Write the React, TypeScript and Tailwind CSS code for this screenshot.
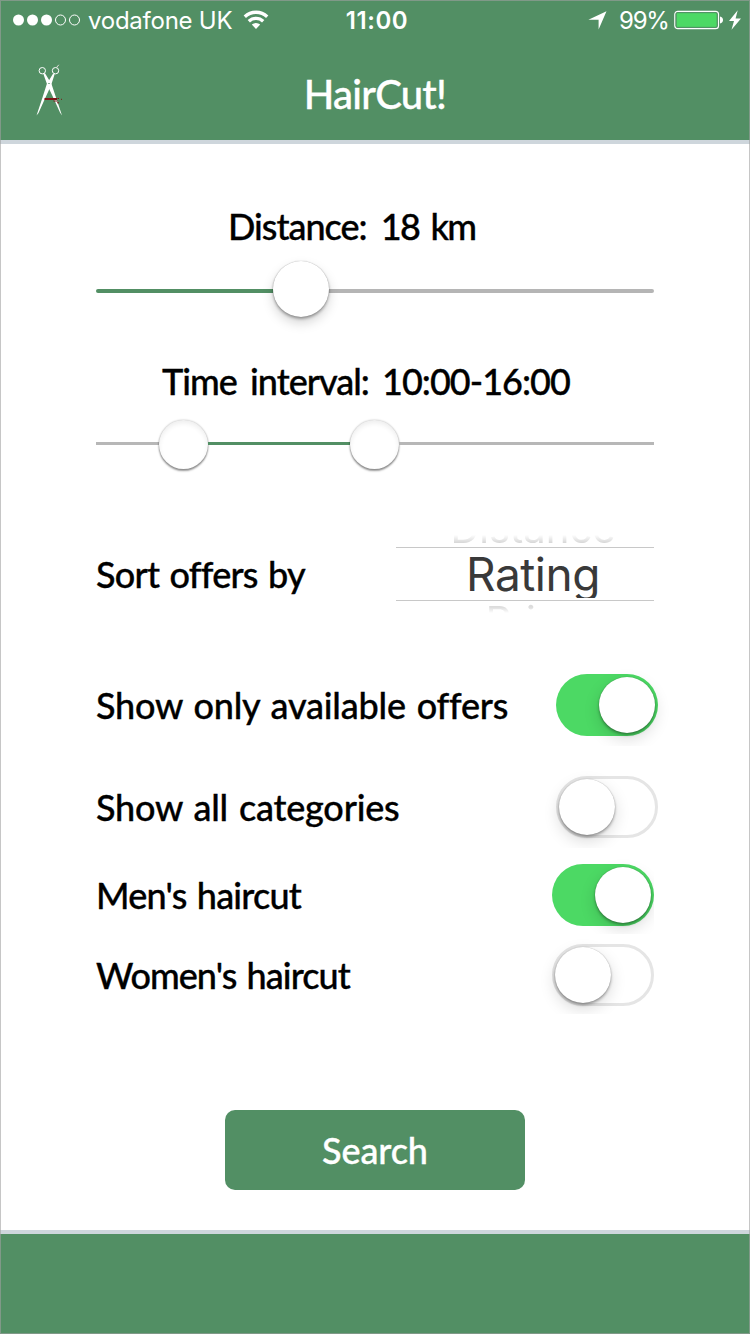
import React from "react";

const labelFont =
  "font-['Lato',sans-serif] font-medium whitespace-nowrap [font-variant-ligatures:none] [-webkit-text-stroke-width:0.35px]";

function StatusBar() {
  return (
    <div className="flex h-10 items-center justify-between pl-[13px] pr-[9px] font-['Inter',sans-serif] text-white">
      <div className="flex w-[280px] items-center">
        <svg width="68" height="12" viewBox="0 0 68 12" fill="#fff">
          <circle cx="5.5" cy="6" r="5.5" />
          <circle cx="19.5" cy="6" r="5.5" />
          <circle cx="33.5" cy="6" r="5.5" />
          <circle cx="47.5" cy="6" r="5" fill="none" stroke="#fff" />
          <circle cx="61.5" cy="6" r="5" fill="none" stroke="#fff" />
        </svg>
        <span className="ml-[7px] w-[146px] whitespace-nowrap pt-[2px] text-[24px] leading-10 tracking-[-0.25px]">vodafone UK</span>
        <svg className="ml-[9px]" width="26" height="20" viewBox="0 0 26 20" fill="none" stroke="#fff" strokeWidth="3.3">
          <path d="M1.8 6.8a16 16 0 0 1 22.4 0" />
          <path d="M5.8 11.3a10.3 10.3 0 0 1 14.4 0" />
          <path d="M8.8 14.6a6.3 6.3 0 0 1 8.4 0L13 19z" fill="#fff" stroke="none" />
        </svg>
      </div>
      <span className="pt-[2px] text-[24px] font-semibold leading-10 tracking-[0.6px]">11:00</span>
      <div className="flex w-[280px] items-center justify-end">
        <svg width="19" height="19" viewBox="0 0 19 19" fill="#fff">
          <path d="M18.5.3 10.6 18.5V8.8H.4z" />
        </svg>
        <span className="ml-[12px] w-[50px] whitespace-nowrap pt-[2px] text-[24px] leading-10 tracking-[-1.2px]">99%</span>
        <svg className="ml-[5px]" width="50" height="20" viewBox="0 0 50 20">
          <rect x=".8" y="1.3" width="43.7" height="17.4" rx="3" fill="none" stroke="#fff" strokeWidth="1.2" />
          <rect x="2.2" y="2.7" width="40.9" height="14.6" rx="1.5" fill="#4cd964" stroke="#528f64" strokeWidth=".9" />
          <path d="M46 6.5c4 .8 4 6.2 0 7z" fill="#fff" />
        </svg>
        <svg className="ml-[5px]" width="12" height="20" viewBox="0 0 12 20" fill="#fff">
          <path d="M8.7.3 0 11h5L2.5 19.7 12 8.4H6.6z" />
        </svg>
      </div>
    </div>
  );
}

function Scissors() {
  return (
    <svg width="28" height="54" viewBox="0 0 28 54" fill="none">
      <circle cx="6.3" cy="6.7" r="3.2" stroke="#fff" strokeWidth="1" />
      <circle cx="19.5" cy="6.7" r="3.2" stroke="#fff" strokeWidth="1" />
      <path d="M20.5 3.5 22.8.8" stroke="#e7dede" strokeWidth="1" />
      <path d="M7.2 9.5 9 9.2 15.5 20 20 33.5 26 51.5 24 48.5 16.5 32 11.5 21.5z" fill="#fff" />
      <path d="M18.7 10 17 9.8 10.8 20 6.5 33.5 .5 51.5 2.5 49 9.5 33.5 15 21.5z" fill="#fff" />
      <path d="M12 19.5h2" stroke="#8fb69b" strokeWidth="1" />
      <path d="M8.5 35H21" stroke="#7b1416" strokeWidth="2" />
      <path d="M17.5 37h4M21 38.8h2M25 35.3h1M21.5 34.5h1.5" stroke="#7b1416" strokeWidth="1" />
    </svg>
  );
}

function Switch({ on, clip }: { on?: boolean; clip?: boolean }) {
  return (
    <div className={clip ? "[clip-path:inset(-12px_0_-8px_-20px)]" : "[clip-path:inset(-12px_-12px_-10px_-20px)]"}>
      <div
        className={
          on
            ? "flex h-[62px] w-[102px] items-center justify-end rounded-full bg-[#4cd964] px-[3px]"
            : "flex h-[62px] w-[102px] items-center rounded-full border-[3px] border-[#e5e5e5] bg-white"
        }
      >
        <div className="size-[56px] rounded-full bg-white shadow-[0_6px_16px_rgba(0,0,0,0.15),0_2px_3px_rgba(0,0,0,0.32),0_0_1px_rgba(0,0,0,0.3)]" />
      </div>
    </div>
  );
}

export default function App() {
  return (
    <div className="relative flex h-[1334px] w-[750px] flex-col overflow-hidden bg-white text-black">
      <header className="h-[144px] border-b-4 border-[#ced6dc] bg-[#528f64]">
        <StatusBar />
        <div className="grid h-[100px] grid-cols-3 px-9 pt-6">
          <Scissors />
          <h1 className={`${labelFont} pt-[5px] text-center text-[40px] leading-[50px] tracking-[-0.75px] text-white`}>HairCut!</h1>
        </div>
      </header>

      <main className="flex h-[1086px] flex-col px-24 pt-[60px]">
        <div className={`${labelFont} pl-[132px] text-[36px] leading-[44px]`}>
          <span className="tracking-[-1.25px] [word-spacing:4px]">
            <span className="tracking-[-1px] [word-spacing:6px]">Distance: </span>
            <span className="tracking-[-1.7px]">18 km</span>
          </span>
        </div>
        <div className="mt-[12px] flex h-[57px] items-center">
          <div className="mt-[5px] h-1 w-[177px] rounded-l-full bg-[#528f64]" />
          <div className="z-10 size-[56px] rounded-full bg-white shadow-[0_6px_12px_rgba(0,0,0,0.17),0_2px_3px_rgba(0,0,0,0.32),0_0_1px_rgba(0,0,0,0.35)]" />
          <div className="mt-[5px] h-1 flex-1 rounded-r-full bg-[#b5b5b5]" />
        </div>

        <div className={`${labelFont} mt-[42px] pl-[66px] text-[36px] leading-[44px]`}>
          <span className="tracking-[-0.98px] [word-spacing:5px]">Time interval: 10:00-16:00</span>
        </div>
        <div className="mt-[16px] flex h-[49px] items-center">
          <div className="h-[3px] w-[63px] bg-[#b7b7b7]" />
          <div className="mt-[2px] size-[49px] rounded-full bg-white shadow-[0_2px_2px_rgba(0,0,0,0.4),0_0_2px_rgba(0,0,0,0.3),inset_0_3px_5px_rgba(0,0,0,0.07)]" />
          <div className="h-[3px] w-[142px] bg-[#528f64]" />
          <div className="mt-[2px] size-[49px] rounded-full bg-white shadow-[0_2px_2px_rgba(0,0,0,0.4),0_0_2px_rgba(0,0,0,0.3),inset_0_3px_5px_rgba(0,0,0,0.07)]" />
          <div className="h-[3px] flex-1 bg-[#b7b7b7]" />
        </div>

        <div className="mt-[67px] flex h-[78px] justify-between">
          <div className={`${labelFont} pt-[17px] text-[36px] leading-[44px]`}>
            <span className="tracking-[-0.75px] [word-spacing:2px]">Sort offers by</span>
          </div>
          <div className="w-[258px] text-center font-['Inter',sans-serif]">
            <div className="flex h-[12px] items-end justify-center overflow-hidden pb-[4px] pl-[16px]">
              <div className="h-[8px] overflow-hidden [mask-image:linear-gradient(to_bottom,transparent,black)]">
                <div className="-mt-[28px] text-[40px] leading-[44px] text-[#d6d6d6]">Distance</div>
              </div>
            </div>
            <div className="h-[54px] overflow-hidden border-y border-[#c8c8c8] pl-[16px]">
              <div className="h-[50px] overflow-hidden text-[46px] leading-[52px] text-[#393939]">
                <span className="tracking-[-0.5px]">Rating</span>
              </div>
            </div>
            <div className="h-[12px] overflow-hidden pl-4 [mask-image:linear-gradient(to_bottom,black_50%,transparent)]">
              <div className="-mt-[2px] text-[40px] leading-[44px] tracking-[-0.5px] text-[#dcdcdc]">Price</div>
            </div>
          </div>
        </div>

        <div className="-mr-1 mt-[61px] flex h-[62px] items-center justify-between">
          <span className={`${labelFont} text-[36px] tracking-[-0.2px] [word-spacing:2px]`}>Show only available offers</span>
          <Switch on />
        </div>
        <div className="-mr-1 mt-[40px] flex h-[62px] items-center justify-between">
          <span className={`${labelFont} text-[36px] tracking-[-0.2px] [word-spacing:2px]`}>Show all categories</span>
          <Switch />
        </div>
        <div className="mt-[26px] flex h-[62px] items-center justify-between">
          <span className={`${labelFont} text-[36px] tracking-[-0.8px] [word-spacing:2px]`}>Men's haircut</span>
          <Switch on clip />
        </div>
        <div className="mt-[18px] flex h-[62px] items-center justify-between">
          <span className={`${labelFont} text-[36px] tracking-[-0.95px] [word-spacing:2px]`}>Women's haircut</span>
          <Switch clip />
        </div>

        <button className={`${labelFont} mt-[104px] h-20 w-[300px] self-center rounded-[10px] bg-[#528f64] text-[36px] tracking-[-0.1px] text-white`}>
          Search
        </button>
      </main>

      <footer className="h-[104px] border-t-4 border-[#ced6dc] bg-[#528f64]" />
      <div className="pointer-events-none absolute inset-0 border border-[#a0a0a0]/60" />
    </div>
  );
}
